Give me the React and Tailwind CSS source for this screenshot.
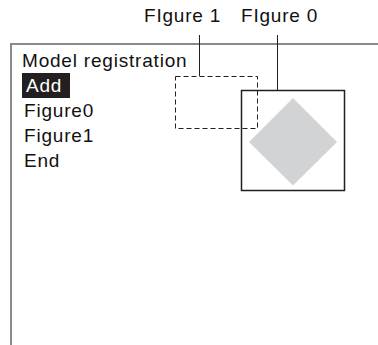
const items = ["Add", "Figure0", "Figure1", "End"];

const Diagram = () => (
  <svg className="absolute left-0 top-0" width="378" height="345" viewBox="0 0 378 345">
    <line x1="199.5" y1="35" x2="199.5" y2="76" stroke="#231f20" strokeWidth="1" />
    <line x1="277.5" y1="35" x2="277.5" y2="90" stroke="#231f20" strokeWidth="1" />
    <rect x="241.5" y="90.5" width="103" height="100" fill="white" stroke="#231f20" strokeWidth="1.5" />
    <polygon points="293,98 337,142 293,185.5 249,142" fill="#d1d3d4" />
    <rect
      x="175.5"
      y="76.5"
      width="82"
      height="52"
      fill="none"
      stroke="#231f20"
      strokeWidth="1"
      strokeDasharray="5 3"
    />
  </svg>
);

const App = () => {
  return (
    <div className="relative w-[378px] h-[345px] overflow-hidden bg-white text-[#111] font-['Liberation_Sans',Arial,sans-serif] text-[19px] leading-[25px] tracking-[0.8px]">
      <div className="flex h-[43px] pt-[3px] pl-[144px]">
        <span className="w-[97px]">FIgure 1</span>
        <span>FIgure 0</span>
      </div>
      <div className="ml-[10px] h-[302px] border-l-2 border-t-2 border-[#8a8a8a] pt-[3px] pl-[10px]">
        <div>Model registration</div>
        {items.map((item) =>
          item === "Add" ? (
            <div key={item}>
              <span className="inline-block w-[48px] bg-[#231f20] pl-[4px] text-white">{item}</span>
            </div>
          ) : (
            <div key={item} className="pl-[2px]">
              {item}
            </div>
          )
        )}
      </div>
      <Diagram />
    </div>
  );
};

export default App;
